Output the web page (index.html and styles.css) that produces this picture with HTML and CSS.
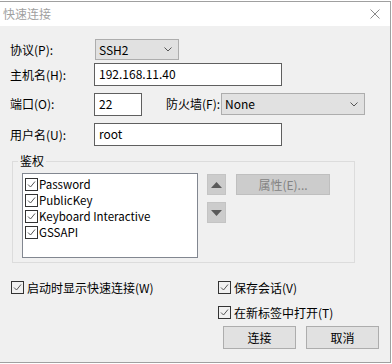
FILE: index.html
```html
<!DOCTYPE html>
<html>
<head>
<meta charset="utf-8">
<link rel="stylesheet" href="styles.css">
</head>
<body>

<div class="window">
	<div class="title-bar">
		<span class="title">快速连接</span>
		<svg class="close" width="10" height="10" viewBox="0 0 10 10"><path d="M0.5 0.5L9.5 9.5M9.5 0.5L0.5 9.5" stroke="#8a8a8a" stroke-width="1" fill="none"/></svg>
	</div>

	<div class="dialog">
		<div class="form-item row-protocol">
			<div class="label-container">协议(P):</div>
			<div class="select select-protocol">
				<span>SSH2</span>
				<svg class="chevron" width="8" height="5" viewBox="0 0 8 5"><path d="M0.5 0.5L4 4L7.5 0.5" stroke="#555" fill="none"/></svg>
			</div>
		</div>

		<div class="form-item row-host">
			<div class="label-container">主机名(H):</div>
			<div class="text-input input-wide">192.168.11.40</div>
		</div>

		<div class="form-item row-port">
			<div class="label-container">端口(O):</div>
			<div class="text-input input-port">22</div>
			<div class="label-firewall">防火墙(F):</div>
			<div class="select select-firewall">
				<span>None</span>
				<svg class="chevron" width="8" height="5" viewBox="0 0 8 5"><path d="M0.5 0.5L4 4L7.5 0.5" stroke="#555" fill="none"/></svg>
			</div>
		</div>

		<div class="form-item row-user">
			<div class="label-container">用户名(U):</div>
			<div class="text-input input-wide">root</div>
		</div>

		<fieldset class="auth-group">
			<legend>鉴权</legend>
			<div class="auth-body">
				<div class="listbox">
					<div class="list-item"><span class="check"><svg width="11" height="11" viewBox="0 0 11 11"><path d="M2 5.5L4.5 8L9 2.5" stroke="#555" fill="none"/></svg></span>Password</div>
					<div class="list-item"><span class="check"><svg width="11" height="11" viewBox="0 0 11 11"><path d="M2 5.5L4.5 8L9 2.5" stroke="#555" fill="none"/></svg></span>PublicKey</div>
					<div class="list-item"><span class="check"><svg width="11" height="11" viewBox="0 0 11 11"><path d="M2 5.5L4.5 8L9 2.5" stroke="#555" fill="none"/></svg></span>Keyboard Interactive</div>
					<div class="list-item"><span class="check"><svg width="11" height="11" viewBox="0 0 11 11"><path d="M2 5.5L4.5 8L9 2.5" stroke="#555" fill="none"/></svg></span>GSSAPI</div>
				</div>
				<div class="arrows">
					<div class="arrow-btn"><svg width="11" height="6" viewBox="0 0 11 6"><path d="M5.5 0L11 6H0Z" fill="#5a5a5a"/></svg></div>
					<div class="arrow-btn"><svg width="11" height="6" viewBox="0 0 11 6"><path d="M0 0H11L5.5 6Z" fill="#5a5a5a"/></svg></div>
				</div>
				<div class="btn btn-disabled">属性(E)...</div>
			</div>
		</fieldset>

		<div class="options">
			<div class="option"><span class="check"><svg width="11" height="11" viewBox="0 0 11 11"><path d="M2 5.5L4.5 8L9 2.5" stroke="#555" fill="none"/></svg></span>启动时显示快速连接(W)</div>
			<div class="option"><span class="check"><svg width="11" height="11" viewBox="0 0 11 11"><path d="M2 5.5L4.5 8L9 2.5" stroke="#555" fill="none"/></svg></span>保存会话(V)</div>
			<div></div>
			<div class="option"><span class="check"><svg width="11" height="11" viewBox="0 0 11 11"><path d="M2 5.5L4.5 8L9 2.5" stroke="#555" fill="none"/></svg></span>在新标签中打开(T)</div>
		</div>

		<div class="button-row">
			<div class="btn btn-action">连接</div>
			<div class="btn btn-action">取消</div>
		</div>
	</div>
</div>

</body>
</html>
```

FILE: styles.css
```css
body {
    margin: 0;
    padding-top: 1px;
    background: #ffffff;
    font-family: "Noto Sans CJK SC", sans-serif;
    font-size: 12px;
    color: #000;
}

.window {
    width: 390px;
    border-top: 1px solid #a0a0a0;
    border-right: 1px solid #a0a0a0;
    border-bottom: 1px solid #a0a0a0;
}

.title-bar {
    height: 24px;
    background: #fff;
    display: flex;
    align-items: center;
    justify-content: space-between;
    padding: 0 10px 0 3px;
}
.title {
    color: #a0a0a0;
    line-height: 16px;
}
.close {
    display: block;
}

.dialog {
    height: 336px;
    box-sizing: border-box;
    background: #f0f0f0;
    padding: 13px 0 0 10px;
}

.form-item {
    display: flex;
    align-items: center;
}
.row-protocol { height: 21px; margin-bottom: 3px; }
.row-host { height: 23px; margin-bottom: 6px; }
.row-port { height: 24px; margin-bottom: 7px; }
.row-user { height: 23px; }

.label-container {
    width: 84px;
    line-height: 16px;
}

.select {
    display: flex;
    align-items: center;
    justify-content: space-between;
    box-sizing: border-box;
    border: 1px solid #adadad;
    background: #e1e1e1;
    padding: 0 6px 0 3px;
    line-height: 16px;
}
.select-protocol {
    width: 84px;
    height: 21px;
    margin-left: 1px;
}
.select-firewall {
    width: 144px;
    height: 22px;
    margin-left: 1px;
}
.chevron {
    display: block;
}

.text-input {
    box-sizing: border-box;
    height: 23px;
    border: 1px solid #5f5f5f;
    background: #fff;
    padding: 2px 4px 0;
    line-height: 16px;
}
.input-wide { width: 188px; }
.input-port { width: 48px; }
.label-firewall {
    margin-left: 24px;
    line-height: 16px;
}

.auth-group {
    margin: 7px 0 0 2px;
    width: 343px;
    box-sizing: border-box;
    border: 1px solid #dcdcdc;
    padding: 4px 0 4px 9px;
    min-width: 0;
}
.auth-group legend {
    margin-left: -4px;
    padding: 0 2px;
    line-height: 16px;
}

.auth-body {
    display: flex;
    align-items: flex-start;
}

.listbox {
    width: 176px;
    height: 85px;
    box-sizing: border-box;
    border: 1px solid #828790;
    background: #fff;
    padding: 2px 0 0 2px;
}
.list-item {
    display: flex;
    align-items: center;
    height: 16px;
    line-height: 16px;
    font-size: 11.5px;
}
.list-item .check {
    margin-right: 1px;
}

.check {
    width: 13px;
    height: 13px;
    box-sizing: border-box;
    border: 1px solid #333;
    display: inline-flex;
    flex: none;
}
.check svg {
    display: block;
}

.arrows {
    margin: 1px 0 0 9px;
    display: flex;
    flex-direction: column;
    gap: 7px;
}
.arrow-btn {
    width: 19px;
    height: 21px;
    box-sizing: border-box;
    background: #cccccc;
    border: 1px solid #c4c4c4;
    display: flex;
    align-items: center;
    justify-content: center;
}

.btn {
    box-sizing: border-box;
    display: flex;
    align-items: center;
    justify-content: center;
    line-height: 16px;
}
.btn-disabled {
    width: 94px;
    height: 21px;
    margin: 1px 0 0 10px;
    background: #cccccc;
    border: 1px solid #bfbfbf;
    color: #838383;
}

.options {
    display: grid;
    grid-template-columns: 207px auto;
    row-gap: 12px;
    margin: 18px 0 0 1px;
}
.option {
    display: flex;
    align-items: center;
    height: 13px;
    line-height: 16px;
}
.option .check {
    margin-right: 3px;
}

.button-row {
    display: flex;
    gap: 10px;
    margin: 7px 0 0 213px;
}
.btn-action {
    width: 73px;
    height: 23px;
    background: #e1e1e1;
    border: 1px solid #adadad;
}
```
